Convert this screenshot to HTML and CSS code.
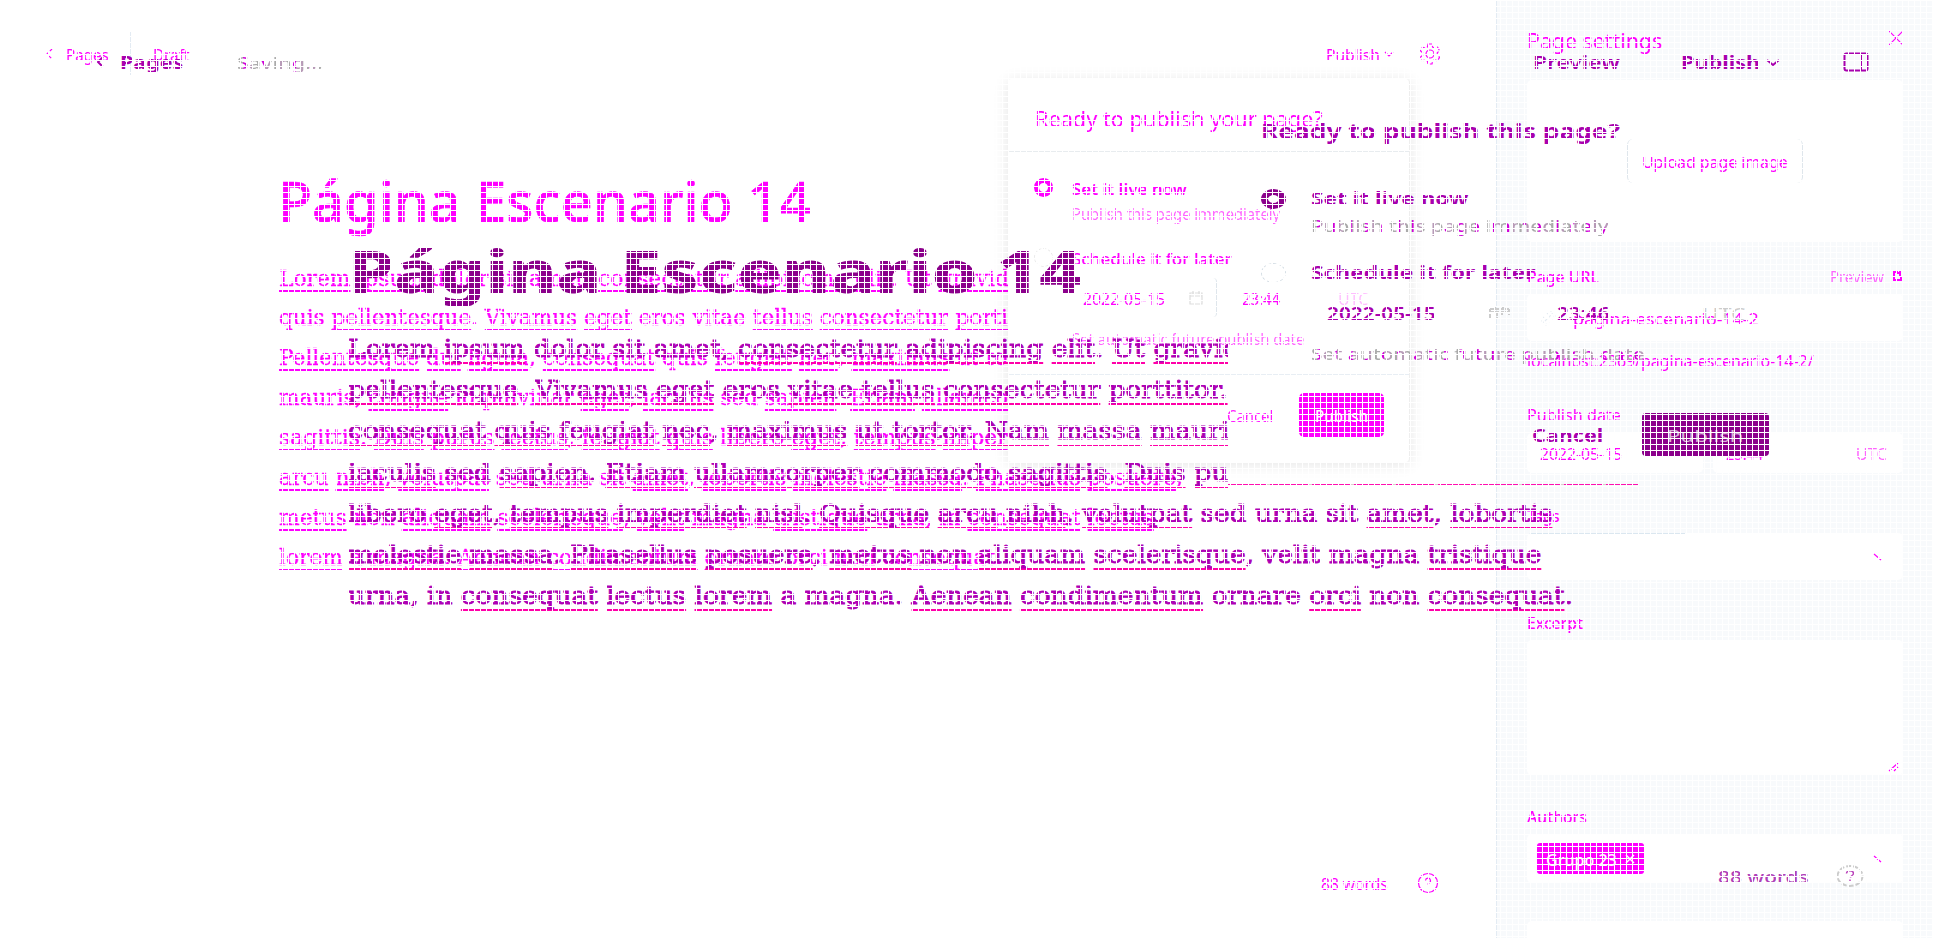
FILE: index.html
```html
<!DOCTYPE html>
<html lang="es">
<head>
<meta charset="utf-8">
<title>Página Escenario 14</title>
<link rel="stylesheet" href="styles.css">
</head>
<body>
<div class="stage">
<div class="screen one">
  <main class="main">
    <header class="bar">
      <svg class="back" width="7" height="12" viewBox="0 0 7 12"><path d="M6 1 1 6l5 5" stroke-dasharray="3 2"/></svg>
      <span class="f" data-w="43">Pages</span><i class="sep"></i><span class="f" data-w="36">Draft</span>
      <span class="f push" data-w="54">Publish</span>
      <svg class="chev" width="10" height="6" viewBox="0 0 10 6"><path d="m1 1 4 4 4-4"/></svg>
      <svg width="20" height="22" viewBox="0 0 20 22"><circle cx="10" cy="11" r="4"/><path d="M8 1h4l.6 3 2 1.200 3-1 2 3.500-2.300 2v2.600l2.300 2-2 3.500-3-1-2 1.200L12 21H8l-.6-3-2-1.200-3 1-2-3.500 2.300-2V9.700l-2.300-2 2-3.500 3 1 2-1.200z" stroke-dasharray="4 2"/></svg>
    </header>
    <h1 class="title"><span class="f" data-w="533">Página Escenario 14</span></h1>
    <div class="prose">
      <p><span class="f" data-w="730"><u>Lorem</u> <u>ipsum</u> dolor sit amet, <u>consectetur</u> <u>adipiscing</u> <u>elit</u>. Ut <u>gravid</u></span></p>
      <p><span class="f" data-w="729">quis <u>pellentesque</u>. <u>Vivamus</u> <u>eget</u> eros vitae <u>tellus</u> <u>consectetur</u> <u>porti</u></span></p>
      <p><span class="f" data-w="729"><u>Pellentesque</u> <u>dui</u> <u>ligula</u>, <u>consequat</u> quis <u>feugiat</u> <u>nec</u>, <u>maximus</u> ut to</span></p>
      <p><span class="f" data-w="729">mauris, <u>congue</u> id pulvinar <u>eget</u>, <u>iaculis</u> sed <u>sapien</u>. <u>Etiam</u> <u>ullamco</u></span></p>
      <p><span class="f" data-w="729"><u>sagittis</u>. <u>Duis</u> <u>purus</u> <u>lectus</u>, <u>feugiat</u> <u>quis</u> libero <u>eget</u>, <u>tempus</u> <u>imper</u></span></p>
      <p><span class="f" data-w="904"><u>arcu</u> <u>nibh</u>, <u>volutpat</u> sed urna sit <u>amet</u>, <u>lobortis</u> <u>molestie</u> <u>massa</u>. <u>Phasellus</u> <u>posuere</u>,</span></p>
      <p><span class="f" data-w="875"><u>metus</u> non <u>aliquam</u> <u>scelerisque</u>, <u>velit</u> magna <u>tristique</u> urna, in <u>consequat</u> <u>lectus</u></span></p>
      <p><span class="f" data-w="723"><u>lorem</u> a magna. <u>Aenean</u> <u>condimentum</u> <u>ornare</u> orci non <u>consequat</u>.</span></p>
    </div>
    <footer class="foot"><span class="f" data-w="67">88 words</span>
      <svg width="22" height="22" viewBox="0 0 22 22"><circle cx="11" cy="11" r="9.500"/><path d="M8.500 8.500a2.500 2.500 0 1 1 3.500 2.500c-.8.4-1 .8-1 1.500"/></svg></footer>
    <section class="pop">
      <div class="pop-head"><span class="f" data-w="288">Ready to publish your page?</span></div>
      <div class="pop-body">
        <div class="opt"><i class="radio on"></i><div><b class="l"><span class="f" data-w="115">Set it live now</span></b><div class="l sub faint"><span class="f" data-w="208">Publish this page immediately</span></div></div></div>
        <div class="opt second"><i class="radio"></i><div><div class="l sch"><span class="f" data-w="160">Schedule it for later</span></div>
          <div class="dates"><div class="date"><span class="f" data-w="82">2022-05-15</span><svg width="16" height="16" viewBox="0 0 16 16"><path d="M2 3h12v11H2zM2 6h12M5 1v3m6-3v3" stroke="#ddd"/></svg></div><div class="time"><span class="f" data-w="38">23:44</span><span class="f utc" data-w="30">UTC</span></div></div>
          <div class="l faint"><span class="f" data-w="232">Set automatic future publish date</span></div></div></div>
      </div>
      <div class="pop-foot"><span class="f" data-w="46">Cancel</span><div class="btn"><span class="f" data-w="53">Publish</span></div></div>
    </section>
  </main>
  <aside class="side">
    <div class="side-head"><span class="f" data-w="135">Page settings</span><svg width="14" height="14" viewBox="0 0 14 14"><path d="m0 0 14 14M14 0 0 14"/></svg></div>
    <div class="box image"><div class="upload"><span class="f" data-w="146">Upload page image</span></div></div>
    <div class="label url"><span class="f" data-w="72">Page URL</span><span class="prev"><span class="f faint" data-w="54">Preview</span><svg width="11" height="12" viewBox="0 0 11 12"><path d="M6 2H2v8h7V6M5 3h3M8 0v6" stroke-width="2"/></svg></span></div>
    <div class="box slug"><svg width="18" height="18" viewBox="0 0 18 18"><path d="m6 12 6-6M8 5l3-3 5 5-3 3M5 8l-3 3 5 5 3-3" stroke="#e4ebf1" stroke-dasharray="3 2"/></svg><span class="f" data-w="186">pagina-escenario-14-2</span></div>
    <div class="label hint"><span class="f" data-w="287">localhost:2369/pagina-escenario-14-2/</span></div>
    <div class="label pub"><span class="f" data-w="94">Publish date</span></div>
    <div class="when"><div class="box d1"><span class="f" data-w="82">2022-05-15</span></div><div class="box d2"><span class="f" data-w="37">23:44</span><span class="f faint" data-w="31">UTC</span></div></div>
    <div class="label tags"><span class="f" data-w="33">Tags</span></div>
    <div class="box select blue"><svg width="10" height="8" viewBox="0 0 10 8"><path d="m1 1 7 6"/></svg></div>
    <div class="label ex"><span class="f" data-w="56">Excerpt</span></div>
    <div class="box area"><svg width="11" height="10" viewBox="0 0 11 10"><path d="m1 9 9-8M6 9l4-4"/></svg></div>
    <div class="label au"><span class="f" data-w="60">Authors</span></div>
    <div class="box select authors"><div class="chip"><span class="f" data-w="71">Grupo 23</span><svg width="10" height="10" viewBox="0 0 10 10"><path d="m1 1 8 8M9 1 1 9" stroke="#fff" stroke-width="1.500"/></svg></div><svg width="10" height="8" viewBox="0 0 10 8"><path d="m1 1 7 6"/></svg></div>
    <div class="box more"></div>
  </aside>
</div>

<div class="screen two">
  <header class="bar2">
    <svg width="9" height="12" viewBox="0 0 9 12"><path d="M7 1 2 6l5 5"/></svg>
    <b class="f pages" data-w="63">Pages</b><span class="f soft saving" data-w="86">Saving...</span>
    <span class="f preview" data-w="87">Preview</span><b class="f publish" data-w="79">Publish</b>
    <svg class="chev2" width="14" height="8" viewBox="0 0 14 8"><path d="m1 1 6 5 6-5"/></svg>
    <svg width="26" height="20" viewBox="0 0 26 20"><rect x="1.500" y="1.500" width="23" height="17" rx="2"/><path d="M18 2v16"/></svg>
  </header>
  <h1 class="title2"><span class="f" data-w="734">Página Escenario 14</span></h1>
  <div class="prose2">
    <p class="cut"><span class="f" data-w="892">Lorem <u>ipsum</u> dolor sit amet, <u>consectetur</u> <u>adipiscing</u> <u>elit</u>. <u>Ut</u> <u>gravid</u></span></p>
    <p class="cut"><span class="f" data-w="880"><u>pellentesque</u>. <u>Vivamus</u> <u>eget</u> eros <u>vitae</u> <u>tellus</u> <u>consectetur</u> <u>porttitor.</u></span></p>
    <p class="cut"><span class="f" data-w="881"><u>consequat</u> <u>quis</u> <u>feugiat</u> <u>nec</u>, <u>maximus</u> <u>ut</u> <u>tortor</u>. <u>Nam</u> <u>massa</u> <u>mauri</u></span></p>
    <p class="cut"><span class="f" data-w="880"><u>iaculis</u> sed <u>sapien</u>. <u>Etiam</u> <u>ullamcorper</u> <u>commodo</u> <u>sagittis</u>. <u>Duis</u> <u>pu</u></span></p>
    <p><span class="f" data-w="1204">libero <u>eget</u>, <u>tempus</u> <u>imperdiet</u> <u>nisl</u>. <u>Quisque</u> <u>arcu</u> <u>nibh</u>, <u>volutpat</u> sed urna sit <u>amet</u>, <u>lobortis</u></span></p>
    <p><span class="f" data-w="1193"><u>molestie</u> <u>massa</u>. <u>Phasellus</u> <u>posuere</u>, <u>metus</u> non <u>aliquam</u> <u>scelerisque</u>, velit magna <u>tristique</u></span></p>
    <p><span class="f" data-w="1225">urna, in <u>consequat</u> <u>lectus</u> <u>lorem</u> a magna. <u>Aenean</u> <u>condimentum</u> ornare <u>orci</u> non <u>consequat</u>.</span></p>
    <i class="rest"></i>
  </div>
  <footer class="foot2"><span class="f count" data-w="91">88 words</span><svg width="28" height="22" viewBox="0 0 28 22"><ellipse cx="14" cy="11" rx="12.500" ry="10" stroke="#ccc" stroke-dasharray="5 2"/><path d="M10.500 8.500c0-4 7-3.500 7 0 0 2-3 2-3 4M14 14.500v1.500" stroke="#b4b" stroke-width="1.500"/></svg></footer>
  <section class="dialog">
    <div class="ask"><b class="f" data-w="359">Ready to publish this page?</b></div>
    <div class="opt2"><i class="radio2 on"></i><div><b class="m"><span class="f" data-w="158">Set it live now</span></b><div class="m near"><span class="f soft" data-w="298">Publish this page immediately</span></div></div></div>
    <div class="opt2 later"><i class="radio2"></i><div><b class="m"><span class="f" data-w="224">Schedule it for later</span></b>
      <div class="m row2"><span class="f med" data-w="109">2022-05-15</span><svg width="21" height="14" viewBox="0 0 21 14"><path d="M1 3h19M1 6h19M1 3v10M6 1v3m8-3v3M20 3v6M8 6v7m5-7v3" stroke="#ccc" stroke-dasharray="4 1"/></svg><span class="f med clock" data-w="53">23:46</span><span class="f utc2" data-w="43">UTC</span></div>
      <div class="m auto"><span class="f soft" data-w="334">Set automatic future publish date</span></div></div></div>
    <div class="acts"><b class="f" data-w="71">Cancel</b><div class="btn2"><span class="f" data-w="77">Publish</span></div></div>
  </section>
</div>
<div class="mesh"></div>
</div>
<script src="fit.js"></script>
</body>
</html>
```

FILE: styles.css
```css
* { box-sizing: border-box; }
body { margin: 0; background: #fff; overflow: hidden; }
.stage { display: grid; width: 1933px; height: 938px; overflow: hidden; font: 400 16.5px/20px "Noto Sans", "Open Sans", sans-serif; }
.screen, .mesh { grid-area: 1 / 1; height: 938px; min-width: 0; overflow: hidden; position: relative; }
.mesh {
  background:
    repeating-linear-gradient(90deg, #fff 0 1px, transparent 1px 6px),
    repeating-linear-gradient(180deg, #fff 0 1px, transparent 1px 6px);
}
h1, p { margin: 0; font-weight: inherit; }
.f { display: inline-block; white-space: nowrap; transform-origin: 0 50%; flex: none; }
svg { fill: none; stroke: currentColor; stroke-width: 1.2; flex: none; display: block; }
u { text-decoration: underline; text-decoration-skip-ink: none; text-decoration-thickness: 2px; text-underline-offset: 4px; }

/* first screen */
.one { color: #f0f; display: grid; grid-template-columns: 1496px 437px; }
.main { position: relative; height: 938px; }
.bar { display: flex; align-items: center; height: 107px; padding: 0 56px 0 46px; }
.back { margin-right: 13px; }
.sep { width: 1px; height: 43px; background: #e3ebf3; margin: 0 22px 0 21px; }
.push { margin-left: auto; }
.chev { margin: 0 26px 0 4px; }
.title { margin-top: 52px; padding-left: 278px; font-size: 57px; line-height: 80px; font-weight: 500; -webkit-text-stroke: .6px #f0f; }
.prose { margin-top: 18.5px; padding-left: 279px; font: 23px/39.9px "DejaVu Serif", serif; -webkit-text-stroke: .35px #f0f; }
.prose p { height: 39.9px; white-space: nowrap; }
.foot { display: flex; align-items: center; gap: 29px; padding-left: 1321px; margin-top: 295px; height: 22px; }
.faint { opacity: .6; }

.pop { position: absolute; left: 1008px; top: 79px; width: 402px; height: 383px; background: #fff; border-radius: 4px; border-right: 1px solid #eee; box-shadow: 0 2px 16px rgba(0,0,0,.11); }
.pop-head { height: 73px; padding: 25px 0 0 27px; border-bottom: 1px solid #e8ecef; font-size: 21px; line-height: 28px; }
.pop-body { height: 223px; padding: 26px 0 0 26px; border-bottom: 1px solid #e8eef4; }
.opt { display: flex; gap: 19px; }
.l { height: 20px; display: block; font-weight: 400; white-space: nowrap; }
b.l { font-weight: 600; }
.sch { font-weight: 500; }
.sub { margin-top: 5px; }
.second { margin-top: 25px; }
.radio { width: 19px; height: 19px; flex: none; border-radius: 50%; border: 1px dashed #e8e8e8; }
.radio.on { border: 5px solid #f0f; }
.dates { display: flex; gap: 13px; margin: 10px 0 11px; height: 39px; }
.date { width: 145px; display: flex; align-items: center; justify-content: space-between; padding: 0 12px 0 11px; border-right: 1px solid #dfe6ec; border-radius: 4px; }
.time { display: flex; align-items: center; padding-left: 12px; }
.utc { margin-left: 58px; opacity: .25; }
.pop-foot { display: flex; align-items: flex-start; padding: 18px 0 0 219px; line-height: 44px; }
.pop-foot > .f { opacity: .9; }
.btn { margin-left: 26px; width: 85px; height: 44px; display: flex; align-items: center; justify-content: center; background: #f0f; color: #fff; border-radius: 5px; font-weight: 500; line-height: 20px; }

.side { border-left: 1px solid #e3ebf3; background: #f8fafc; padding: 0 30px; height: 938px; overflow: hidden; }
.side-head { height: 80px; padding-top: 26px; display: flex; justify-content: space-between; align-items: flex-start; font-size: 21px; line-height: 28px; }
.side-head svg { margin-top: 5px; }
.box { background: #fff; border-radius: 5px; }
.image { height: 162px; display: flex; align-items: center; justify-content: center; }
.upload { width: 176px; height: 44px; display: flex; align-items: center; justify-content: center; border: 1px solid #dfe6ec; border-width: 0 1px; border-radius: 6px; }
.label { height: 20px; font-weight: 500; white-space: nowrap; }
.url { margin: 24px 0 8px; display: flex; justify-content: space-between; align-items: center; }
.prev { display: flex; gap: 8px; align-items: center; font-weight: 400; }
.slug { height: 47px; padding-left: 12px; display: flex; align-items: center; gap: 16px; font-size: 17px; }
.hint { margin-top: 9px; font-weight: 400; }
.pub { margin: 34px 0 9px; font-weight: 400; }
.when { display: flex; gap: 10px; }
.when .box { height: 40px; display: flex; align-items: center; padding-left: 13px; }
.d1 { width: 176px; }
.d2 { flex: 1; justify-content: space-between; padding-right: 16px; }
.tags { margin: 32px 0 8px; }
.select { height: 47px; display: flex; align-items: center; justify-content: flex-end; padding-right: 20px; }
.blue { background: linear-gradient(#dbe7f0, #dbe7f0) 0 0 / 158px 1px no-repeat #fff; }
.ex { margin: 32px 0 8px; }
.area { height: 135px; display: flex; align-items: flex-end; justify-content: flex-end; padding: 0 4px 3px; }
.au { margin: 31px 0 8px; }
.authors { height: 49px; justify-content: space-between; padding-left: 10px; }
.chip { width: 107px; height: 31px; background: #f0f; color: #fff; border-radius: 3px; display: flex; align-items: center; justify-content: center; gap: 9px; font-weight: 500; }
.more { height: 40px; margin-top: 38px; }

/* second screen */
.two { color: #a800ae; font-size: 17px; }
.two svg { stroke-width: 2; }
.bar2 { display: flex; align-items: center; height: 124px; padding: 0 64px 0 96px; }
.pages { margin-left: 15px; }
.saving { margin-left: 54px; }
.preview { margin-left: auto; font-weight: 600; }
.publish { margin-left: 61px; }
.chev2 { margin: 2px 63px 0 6px; }
.soft { color: transparent; font-weight: 500; background: repeating-linear-gradient(90deg, #aaa 0 5px, #d000d8 5px 8px, #b79ab7 8px 13px); background-clip: text; -webkit-background-clip: text; }
.med { font-weight: 600; }
.title2 { margin-top: 106px; padding-left: 348px; font-size: 58px; line-height: 80px; font-weight: 800; color: #8b008b; }
.prose2 { position: relative; margin-top: 18px; padding-left: 348px; font: 24px/41.2px "DejaVu Serif", serif; -webkit-text-stroke: .9px #b000b8; }
.prose2 p { height: 41.2px; white-space: nowrap; }
.prose2 .cut { width: 880px; overflow: hidden; }
.prose2 u { text-decoration-color: #ff00a8; text-underline-offset: 5px; }
.rest { position: absolute; left: 1228px; top: 156px; width: 410px; height: 1px; background: repeating-linear-gradient(90deg, #ff10b0 0 38px, #dcc 38px 42px); }
.foot2 { margin-top: 249px; height: 22px; padding-left: 1718px; display: flex; align-items: center; gap: 27px; }
.count { color: #b040b8; font-weight: 500; }
.dialog { position: absolute; left: 1261px; top: 115px; width: 600px; }
.ask { height: 28px; font-size: 22px; line-height: 28px; }
.opt2 { display: flex; gap: 25px; margin-top: 43px; }
.m { display: block; height: 24px; line-height: 24px; white-space: nowrap; }
.near { margin-top: 3px; }
.radio2 { width: 25px; height: 20px; margin-top: 3px; border-radius: 50%; border: 1px dashed #d4dde4; flex: none; }
.radio2.on { border: 6px solid #8b008b; border-width: 6px 7px; }
.later { margin-top: 23px; }
.row2 { margin-top: 17px; display: flex; align-items: center; padding-left: 16px; }
.row2 svg { margin: 0 47px 0 53px; }
.utc2 { margin-left: 93px; color: #ccc; }
.auto { margin-top: 16px; }
.acts { margin-top: 48px; padding-left: 271px; display: flex; align-items: center; gap: 39px; }
.btn2 { width: 127px; height: 43px; background: #8b008b; color: #d9b3d9; border-radius: 4px; display: flex; align-items: center; justify-content: center; }
```

FILE: fit.js
```js
// Scale every text run horizontally to its declared width.
document.querySelectorAll('.f').forEach(function (el) {
  var natural = el.offsetWidth;
  var wanted = parseFloat(el.dataset.w);
  el.style.transform = 'translateY(1px) scaleX(' + wanted / natural + ')';
  el.style.marginRight = (wanted - natural) + 'px';
});
```
